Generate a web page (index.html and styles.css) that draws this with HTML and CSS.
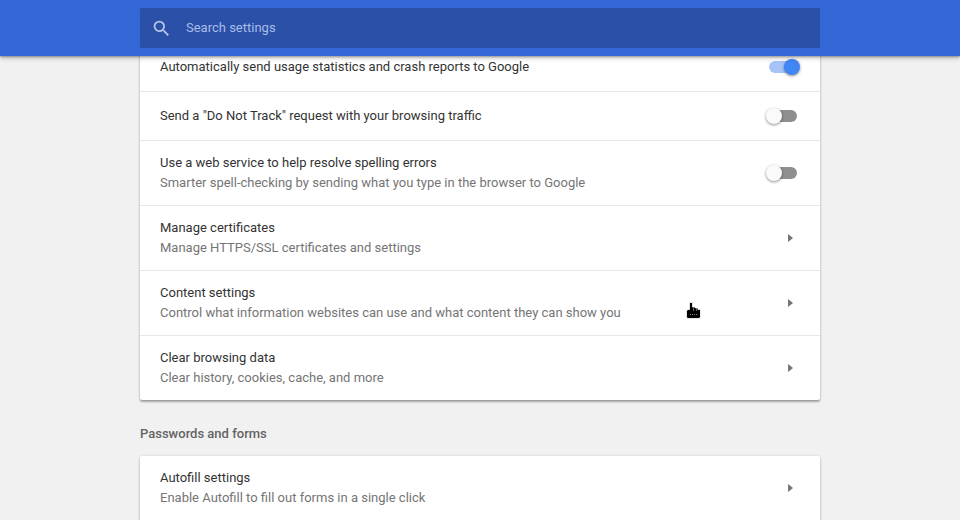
FILE: index.html
```html
<!DOCTYPE html>
<html lang="en">
<head>
<meta charset="utf-8">
<title>Settings</title>
<link rel="stylesheet" href="styles.css">
</head>
<body>
<header class="topbar">
  <div class="search">
    <svg class="search-icon" width="21" height="21" viewBox="0 0 24 24"><path fill="currentColor" d="M15.5 14h-.79l-.28-.27A6.47 6.47 0 0 0 16 9.5 6.5 6.5 0 1 0 9.5 16c1.61 0 3.09-.59 4.23-1.57l.27.28v.79l5 4.99L20.49 19l-4.99-5zm-6 0C7.01 14 5 11.99 5 9.5S7.01 5 9.5 5 14 7.01 14 9.500 11.99 14 9.500 14z"/></svg>
    <span class="search-text">Search settings</span>
  </div>
</header>
<main class="page">
  <section class="card">
    <div class="row row-single row-first">
      <div class="label">Automatically send usage statistics and crash reports to Google</div>
      <span class="toggle on"><span class="track"></span><span class="knob"></span></span>
    </div>
    <div class="row row-single">
      <div class="label">Send a "Do Not Track" request with your browsing traffic</div>
      <span class="toggle"><span class="track"></span><span class="knob"></span></span>
    </div>
    <div class="row">
      <div><div class="label">Use a web service to help resolve spelling errors</div><div class="sub">Smarter spell-checking by sending what you type in the browser to Google</div></div>
      <span class="toggle"><span class="track"></span><span class="knob"></span></span>
    </div>
    <div class="row">
      <div><div class="label">Manage certificates</div><div class="sub">Manage HTTPS/SSL certificates and settings</div></div>
      <span class="arrow"></span>
    </div>
    <div class="row">
      <div><div class="label">Content settings</div><div class="sub">Control what information websites can use and what content they can show you</div></div>
      <span class="arrow"></span>
    </div>
    <div class="row">
      <div><div class="label">Clear browsing data</div><div class="sub">Clear history, cookies, cache, and more</div></div>
      <span class="arrow"></span>
    </div>
  </section>
  <h2 class="section-title">Passwords and forms</h2>
  <section class="card card-open">
    <div class="row row-first-tall">
      <div><div class="label">Autofill settings</div><div class="sub">Enable Autofill to fill out forms in a single click</div></div>
      <span class="arrow"></span>
    </div>
  </section>
</main>
<svg class="cursor" width="18" height="18" viewBox="0 0 18 18">
  <path fill="#000" stroke="#fff" stroke-opacity=".8" stroke-width="1" stroke-linejoin="round" d="M4.500 .5H7.500V5H10.500V6H13V7.500H15.500V14.500L14.500 16.500H2.500L1.500 15V8H3V7.500H4.500Z"/>
  <path fill="none" stroke="#fff" stroke-opacity=".55" stroke-width="1" stroke-dasharray="1 1" d="M5 12.500H13"/>
  <path fill="none" stroke="#fff" stroke-opacity=".4" stroke-width="1" d="M8.500 5.500V9M11.500 6.500V9"/>
</svg>
</body>
</html>
```

FILE: styles.css
```css
* { box-sizing: border-box; }
html, body { margin: 0; height: 520px; overflow: hidden; }
body {
  background: #f1f1f1;
  font-family: Roboto, "Liberation Sans", sans-serif;
  font-size: 13px;
  color: #333;
  position: relative;
}
.topbar {
  position: absolute;
  top: 0;
  left: 0;
  right: 0;
  height: 56px;
  z-index: 2;
  background: #3367d6;
  box-shadow: 0 1px 2px rgba(0,0,0,.3), 0 2px 5px rgba(0,0,0,.22);
  display: flex;
  justify-content: center;
  padding-top: 8px;
}
.search {
  width: 680px;
  height: 40px;
  background: #2a50a7;
  border-radius: 2px;
  display: flex;
  align-items: center;
  padding-left: 11px;
  color: #a8bde8;
}
.search-icon { flex: none; color: #b5c6ec; }
.search-text { margin-left: 14px; margin-bottom: 2px; font-size: 13px; }
.page { width: 680px; margin: 0 auto; padding-top: 43px; }
.card {
  background: #fff;
  border-radius: 2px;
  box-shadow: 0 2px 2px rgba(0,0,0,.3), 0 0 3px rgba(0,0,0,.15);
}
.card-open { padding-bottom: 16px; }
.row {
  height: 65px;
  padding: 0 20px;
  display: flex;
  align-items: center;
  justify-content: space-between;
  border-top: 1px solid #e8e8e8;
}
.row-single { height: 49px; }
.row-first { border-top: none; height: 48px; }
.row-first-tall { border-top: none; height: 64px; }
.label { line-height: 20px; color: #333; }
.sub { line-height: 20px; color: #757575; }
.section-title {
  margin: 0;
  height: 56px;
  padding-top: 26px;
  font-size: 13px;
  line-height: 16px;
  font-weight: 500;
  color: #646464;
}
.toggle { position: relative; flex: none; width: 34px; height: 20px; }
.track {
  position: absolute;
  left: 5px;
  top: 4px;
  width: 26px;
  height: 12px;
  border-radius: 6px;
  background: #8f8f8f;
}
.knob {
  position: absolute;
  left: 0;
  top: 2px;
  width: 16px;
  height: 16px;
  border-radius: 50%;
  background: #fafafa;
  box-shadow: 0 1px 3px rgba(0,0,0,.45);
}
.toggle.on .track { left: 3px; width: 26px; background: #a6c4f8; }
.toggle.on .knob { left: 18px; background: #4285f4; }
.arrow {
  flex: none;
  margin-right: 7px;
  width: 0;
  height: 0;
  border-left: 5px solid #757575;
  border-top: 4px solid transparent;
  border-bottom: 4px solid transparent;
}
.cursor { position: absolute; left: 685px; top: 302px; z-index: 3; }
```
